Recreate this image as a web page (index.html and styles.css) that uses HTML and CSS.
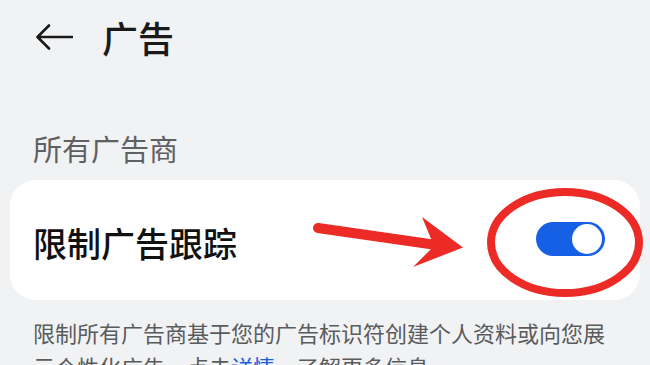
FILE: index.html
```html
<!DOCTYPE html>
<html lang="zh-CN">
<head>
    <meta charset="UTF-8">
    <meta name="viewport" content="width=device-width, initial-scale=1.0">
    <title>广告</title>
    <link rel="stylesheet" href="styles.css">
</head>
<body>
    <div class="page">
        <div class="header">
            <svg class="back" width="37" height="26" viewBox="0 0 37 26">
                <path d="M36 13 H2 M13 1.5 L1.5 13 L13 24.5" fill="none" stroke="#1a1a1a" stroke-width="2.6" stroke-linecap="round" stroke-linejoin="round"/>
            </svg>
            <h1>广告</h1>
        </div>

        <div class="section-label">所有广告商</div>

        <div class="card">
            <span class="card-title">限制广告跟踪</span>
            <span class="switch on"><span class="knob"></span></span>
        </div>

        <p class="desc">限制所有广告商基于您的广告标识符创建个人资料或向您展示个性化广告，点击<a href="#">详情</a>，了解更多信息</p>

        <!-- 标注 -->
        <svg class="marks" width="650" height="365" viewBox="0 0 650 365">
            <line x1="318" y1="228" x2="440" y2="245.5" stroke="#ec2a26" stroke-width="10" stroke-linecap="round"/>
            <polygon points="422,217 463,247.5 413,267 434,246" fill="#ec2a26"/>
            <ellipse cx="565" cy="242.5" rx="74" ry="50.5" fill="none" stroke="#ec2a26" stroke-width="8"/>
        </svg>
    </div>
</body>
</html>
```

FILE: styles.css
```css
/* 基础 */
body {
    margin: 0;
    background-color: #f1f2f4;
    font-family: "Noto Sans CJK SC", "Noto Sans", sans-serif;
    color: #111;
}
.page {
    position: relative;
    width: 650px;
    height: 365px;
    overflow: hidden;
}

/* 顶栏 */
.header {
    height: 74px;
    display: flex;
    align-items: center;
    gap: 29px;
    padding-left: 36px;
}
.header h1 {
    margin: 0;
    font-size: 36px;
    line-height: 40px;
    font-weight: 500;
    color: #1a1a1a;
}

.section-label {
    padding: 56px 0 0 33px;
    font-size: 29px;
    line-height: 36px;
    color: #5f6062;
}

/* 卡片 */
.card {
    margin: 14px 10px 0 10px;
    height: 120px;
    background-color: #fff;
    border-radius: 26px;
    display: flex;
    align-items: center;
    justify-content: space-between;
    padding: 0 35px 0 23px;
}
.card-title {
    font-size: 34px;
    line-height: 40px;
    font-weight: 500;
    color: #111;
    margin-top: 5px;
}
.switch {
    width: 69px;
    height: 34px;
    border-radius: 17px;
    background-color: #1660e6;
    display: flex;
    align-items: center;
    justify-content: flex-end;
    padding: 0 3px;
    box-sizing: border-box;
    margin-top: -2px;
}
.knob {
    width: 30px;
    height: 30px;
    border-radius: 50%;
    background-color: #fff;
}

.desc {
    margin: 15px 0 0 0;
    padding: 0 30px 0 33px;
    font-size: 22px;
    line-height: 34px;
    color: #5a5b5d;
}
.desc a {
    color: #1a5fdc;
    text-decoration: none;
}

.marks {
    position: absolute;
    left: 0;
    top: 0;
    pointer-events: none;
}
```
